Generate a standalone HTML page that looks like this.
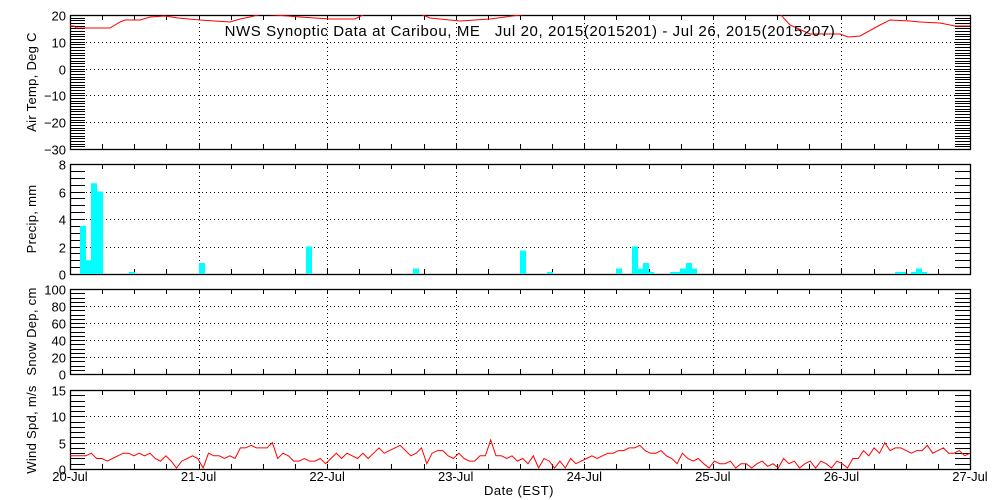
<!DOCTYPE html><html><head><meta charset="utf-8"><style>
html,body{margin:0;padding:0;background:#fff;width:1000px;height:500px;overflow:hidden}
svg text{font-family:"Liberation Sans",sans-serif;font-size:12px;fill:#000;white-space:pre}
</style></head><body>
<svg id="s" width="1000" height="500" xmlns="http://www.w3.org/2000/svg"></svg>
<script>
var s=document.getElementById('s'),o='';
var X0=70,X1=970,DW=900/7;
function L(x1,y1,x2,y2,st){o+='<line x1="'+x1+'" y1="'+y1+'" x2="'+x2+'" y2="'+y2+'" stroke="#000" stroke-width="1" '+(st||'')+'/>';}
function T(x,y,t,a,extra){o+='<text x="'+x+'" y="'+y+'" text-anchor="'+(a||'end')+'" '+(extra||'')+'>'+t+'</text>';}
var dot='stroke-dasharray="1,3"';
function panel(top,bot,vmin,vmax,major,minor,lab,labels){
  var sc=(bot-top)/(vmax-vmin);function Y(v){return bot-(v-vmin)*sc;}
  for(var v=vmin;v<=vmax+1e-6;v+=minor){var y=Math.round(Y(v))+0.5;L(X0,y,X0+15,y);L(X1-15,y,X1,y);}
  for(var v=vmin;v<=vmax+1e-6;v+=major){var y=Math.round(Y(v))+0.5;
    if(v>vmin&&v<vmax)L(X0,y,X1,y,dot);T(66,y+5,(v<0?'\u2212'+(-v):v),'end','style="font-size:13px"');}
  for(var d=1;d<7;d++){var x=Math.round(X0+d*DW)+0.5;L(x,top,x,bot,dot);}
  for(var h=1;h<28;h++){var x=Math.round(X0+h*DW/4)+0.5;L(x,bot,x,bot-5);L(x,top,x,top+5);}
  o+='<rect x="'+(X0+0.5)+'" y="'+(top+0.5)+'" width="'+(X1-X0)+'" height="'+(bot-top)+'" fill="none" stroke="#000" stroke-width="1.3"/>';
  var cy=(top+bot)/2;T(36,cy,lab,'middle','style="font-size:13px;letter-spacing:0.3px" transform="rotate(-90 36 '+cy+')"');
  return Y;
}
var Yt=panel(15,149,-30,20,10,1,'Air Temp, Deg C');
var Yp=panel(164,274,0,8,2,0.5,'Precip, mm');
var Ys=panel(289,374,0,100,20,5,'Snow Dep, cm');
var Yw=panel(390,469,0,15,5,1,'Wind Spd, m/s');
var tp=[[70,26],[74,26],[76,28],[110,28],[120,22],[125,20],[140,20],[150,17],[165,16],[178,18],[200,20],[230,22],[240,19],[250,17],[262,14],[300,17],[330,19],[355,19],[365,14],[420,14],[430,18],[460,21],[490,19],[520,15],[530,14],[600,14],[780,14],[790,25],[810,34],[840,34],[848,37],[860,36],[880,25],[890,20],[910,21],[920,22],[940,23],[955,26],[970,26]];
o+='<svg x="70" y="15" width="900" height="134" overflow="hidden"><polyline fill="none" stroke="#f00" stroke-width="1" points="'+tp.map(function(p){return (p[0]-70)+','+(p[1]-15)}).join(' ')+'"/></svg>';
T(530,36,'NWS Synoptic Data at Caribou, ME   Jul 20, 2015(2015201) - Jul 26, 2015(2015207)','middle','style="font-size:15px;letter-spacing:0.6px"');
var pb=[[80,86,3.5],[86,91,1],[91,97,6.6],[97,103,6],[129,135,0.1],[199,205,0.8],[306,312,2],[413,419,0.4],[520,526,1.7],[547,553,0.1],[616,622,0.4],[632,638,2],[638,643,0.4],[643,649,0.8],[649,654,0.1],[670,680,0.1],[680,686,0.4],[686,692,0.8],[692,697,0.4],[895,906,0.1],[911,916,0.1],[916,922,0.4],[922,927,0.1]];
pb.forEach(function(b){var y=Math.min(Yp(b[2]),272);o+='<rect x="'+b[0]+'" y="'+y+'" width="'+(b[1]-b[0])+'" height="'+(274-y)+'" fill="#0ff"/>';});
var wv=[2.5,2.5,2.5,2.5,3,2,2,1.5,2,2.5,3,3,2.5,3,2.5,3,2,1.5,2.5,1.5,0,1.5,2,2.5,2,0,3,2.5,2.5,2,2.5,2,4,4,4.5,4,4,4,5,2,3,2.5,1.5,1.5,2,1.5,1.5,2,1,2,3,2,3,2.5,2,3,2,3,4,3,3.5,4,4.5,3.5,2.5,3,4,1,3,3.5,3.5,2.5,2,3,2,1.5,1.5,2.5,2.5,5.5,2.5,2.5,2,2.5,1.5,2,1,2.5,0,2,1.5,0,1.5,0,2,1,1.5,2,2.5,2,2.5,3,3,3.5,3.5,4,4,4.5,3.5,3,3,3.5,2.5,2,1,3,2,1.5,2,1,0,1.5,1,1,1.5,0,1,1,0,1,1.5,0.5,1,0,2,1,1.5,0,1,1.5,0,1.5,1,0,1.5,1,0,2,2,3.5,2.5,4,3,5,3.5,4,4,3.5,3,3.5,3.5,4.5,3,3.5,4,3,3,3.5,2.5,3];
var n=wv.length;o+='<polyline fill="none" stroke="#f00" stroke-width="1" points="'+wv.map(function(v,i){return (X0+i*900/(n-1)).toFixed(1)+','+Math.min(Yw(v),468).toFixed(1)}).join(' ')+'"/>';
var days=['20-Jul','21-Jul','22-Jul','23-Jul','24-Jul','25-Jul','26-Jul','27-Jul'];
days.forEach(function(d,i){T(X0+i*DW,481,d,'middle','style="font-size:13px"');});
T(519,495,'Date (EST)','middle','style="font-size:13px;letter-spacing:0.5px"');
s.innerHTML=o;
</script>
</body></html>
